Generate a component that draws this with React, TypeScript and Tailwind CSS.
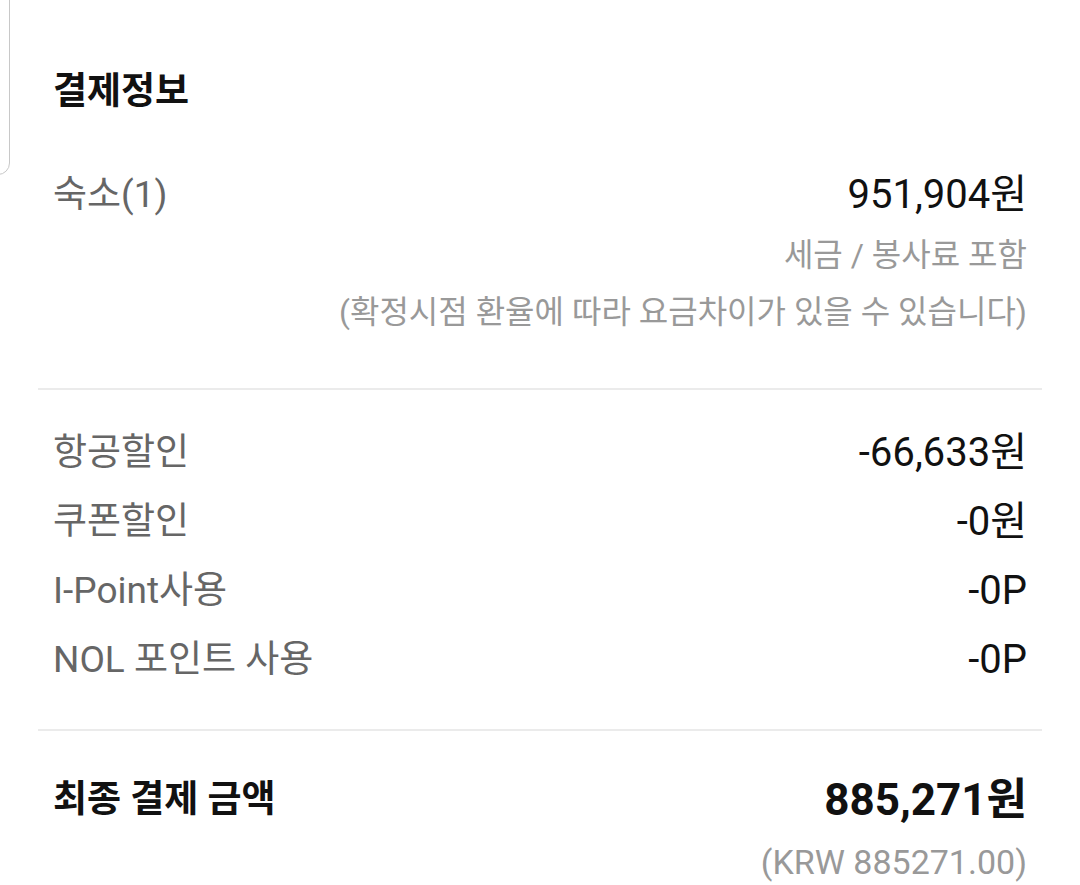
import React from "react";

interface IRow {
  label: string;
  value: string;
}

const discounts: IRow[] = [
  { label: "항공할인", value: "-66,633원" },
  { label: "쿠폰할인", value: "-0원" },
  { label: "I-Point사용", value: "-0P" },
  { label: "NOL 포인트 사용", value: "-0P" },
];

function App() {
  return (
    <main
      className="relative w-[1080px] h-[885px] bg-white overflow-hidden tabular-nums"
      style={{ fontFamily: 'Roboto, "Noto Sans CJK KR", sans-serif' }}
    >
      {/* edge of the panel behind, peeking in from the left */}
      <div className="absolute -left-[40px] -top-[20px] w-[50px] h-[195px] border border-[#c8c8c8] rounded-br-[12px]" />

      <section className="px-[53px]">
        <h2 className="mt-[68px] h-[48px] leading-[48px] text-[37px] font-bold text-[#111]">결제정보</h2>

        <div className="mt-[55px] flex items-center justify-between h-[48px] leading-[48px]">
          <span className="text-[37px] text-[#666]">숙소(1)</span>
          <span className="text-[40px] text-[#111]">951,904원</span>
        </div>
        <p className="mt-[15px] h-[42px] leading-[42px] text-right text-[32px] text-[#999]">세금 / 봉사료 포함</p>
        <p className="mt-[15px] h-[42px] leading-[42px] text-right text-[32px] text-[#999]">
          (확정시점 환율에 따라 요금차이가 있을 수 있습니다)
        </p>
      </section>

      <hr className="mt-[55px] mx-[38px] border-0 h-[2px] bg-[#ebebeb]" />

      <section className="px-[53px] mt-[39px] flex flex-col gap-[21px]">
        {discounts.map((row) => (
          <div key={row.label} className="flex items-center justify-between h-[48px] leading-[48px]">
            <span className="text-[37px] text-[#666]">{row.label}</span>
            <span className="text-[40px] text-[#111]">{row.value}</span>
          </div>
        ))}
      </section>

      <hr className="mt-[45px] mx-[38px] border-0 h-[2px] bg-[#ebebeb]" />

      <section className="px-[53px]">
        <div className="mt-[45px] flex items-center justify-between h-[48px] leading-[48px]">
          <span className="text-[37px] font-bold text-[#111]">최종 결제 금액</span>
          <span className="text-[44px] font-bold text-[#111]">885,271원</span>
        </div>
        <p className="mt-[17px] h-[42px] leading-[42px] text-right text-[34px] text-[#999]">(KRW 885271.00)</p>
      </section>
    </main>
  );
}

export default App;
